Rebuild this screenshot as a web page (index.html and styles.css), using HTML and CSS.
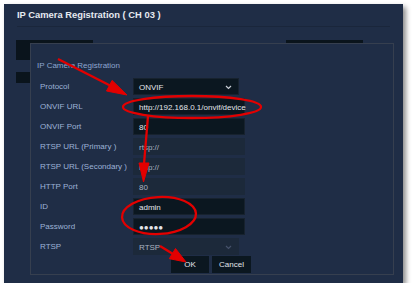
FILE: index.html
```html
<!DOCTYPE html>
<html lang="en">
<head>
    <meta charset="UTF-8">
    <meta name="viewport" content="width=device-width, initial-scale=1.0">
    <title>IP Camera Registration</title>
    <link rel="stylesheet" href="styles.css">
</head>
<body>
    <div class="panel">
        <div class="panel-header">IP Camera Registration ( CH 03 )</div>
        <div class="panel-body">
            <div class="bg-row">
                <div class="bg-block"></div>
                <div class="bg-block"></div>
            </div>
            <div class="bg-row short">
                <div class="bg-block"></div>
            </div>
        </div>

        <div class="dialog">
            <div class="dialog-title">IP Camera Registration</div>
            <form class="dialog-form">
                <div class="row">
                    <label>Protocol</label>
                    <div class="field select">ONVIF
                        <svg class="chev" width="7" height="5" viewBox="0 0 7 5"><path d="M1 1 L3.5 3.5 L6 1" fill="none" stroke="#c9ced6" stroke-width="1.2"/></svg>
                    </div>
                </div>
                <div class="row">
                    <label>ONVIF URL</label>
                    <div class="field">http://192.168.0.1/onvif/device</div>
                </div>
                <div class="row">
                    <label>ONVIF Port</label>
                    <div class="field">80</div>
                </div>
                <div class="row">
                    <label>RTSP URL (Primary )</label>
                    <div class="field disabled">rtsp://</div>
                </div>
                <div class="row">
                    <label>RTSP URL (Secondary )</label>
                    <div class="field disabled">rtsp://</div>
                </div>
                <div class="row">
                    <label>HTTP Port</label>
                    <div class="field disabled">80</div>
                </div>
                <div class="row">
                    <label>ID</label>
                    <div class="field">admin</div>
                </div>
                <div class="row">
                    <label>Password</label>
                    <div class="field">&#9679;&#9679;&#9679;&#9679;&#9679;</div>
                </div>
                <div class="row">
                    <label>RTSP</label>
                    <div class="field select disabled">RTSP
                        <svg class="chev" width="7" height="5" viewBox="0 0 7 5"><path d="M1 1 L3.5 3.5 L6 1" fill="none" stroke="#45516a" stroke-width="1.2"/></svg>
                    </div>
                </div>
                <div class="buttons">
                    <button type="button" class="btn ok">OK</button>
                    <button type="button" class="btn">Cancel</button>
                </div>
            </form>
        </div>
    </div>

    <!-- red markup drawn over the screenshot -->
    <svg class="marks" width="415" height="295" viewBox="0 0 415 295">
        <g fill="#e30000" stroke="#e30000">
            <line x1="58" y1="59" x2="111" y2="86" stroke-width="2.3"/>
            <polygon points="127,95 106.5,91 112.1,80.4" stroke-width="1"/>
            <line x1="148" y1="116" x2="144" y2="164" stroke-width="2.3"/>
            <polygon points="143.5,182 139,163 149,163" stroke-width="1"/>
            <line x1="160" y1="246" x2="173" y2="254" stroke-width="2.3"/>
            <polygon points="186,262 169.3,258.7 175.5,248.5" stroke-width="1"/>
        </g>
        <g fill="none" stroke="#e30000" stroke-width="2.3">
            <ellipse cx="192" cy="107" rx="69" ry="11"/>
            <ellipse cx="159" cy="215.5" rx="37" ry="18.5" transform="rotate(-3 159 215.5)"/>
        </g>
    </svg>
</body>
</html>
```

FILE: styles.css
```css
body {
    margin: 0;
    background: #ffffff;
    font-family: "Liberation Sans", Arial, sans-serif;
}
.panel {
    position: relative;
    margin: 4px 0 0 4px;
    width: 399px;
    height: 279px;
    background: #1f2d46;
    box-shadow: 3px 3px 5px rgba(0, 0, 0, 0.45);
}
.panel-header {
    margin: 0 13px;
    height: 22px;
    line-height: 22px;
    font-size: 9.4px;
    font-weight: bold;
    color: #e6eaf0;
    border-bottom: 1px solid #1a263b;
}
.panel-body {
    padding: 13px 40px 0 12px;
}
.bg-row {
    display: flex;
    justify-content: space-between;
    height: 20px;
}
.bg-row.short {
    margin-top: 12px;
    height: 11px;
}
.bg-block {
    width: 77px;
    background: #0a141c;
}
.dialog {
    position: absolute;
    left: 26px;
    top: 39px;
    width: 364px;
    height: 232px;
    box-sizing: border-box;
    border: 1px solid #363f4f;
    background: #1f2d46;
    padding: 16px 9px 0 9px;
}
.dialog-title {
    margin-left: -3px;
    height: 12px;
    line-height: 12px;
    font-size: 8px;
    color: #8ea6cf;
    margin-bottom: 6px;
}
.dialog-form {
    display: flex;
    flex-direction: column;
    gap: 3px;
}
.row {
    display: flex;
    height: 17px;
}
.row label {
    width: 93px;
    line-height: 17px;
    font-size: 8px;
    color: #9db2d6;
}
.field {
    position: relative;
    width: 112px;
    height: 17px;
    box-sizing: border-box;
    padding-left: 5px;
    line-height: 17px;
    font-size: 8px;
    color: #e2e5ea;
    background: #0b1720;
    border: 1px solid #17222e;
}
.field.disabled {
    background: #1c293a;
    border-color: #1c293a;
    color: #aab3c0;
}
.field.select {
    width: 106px;
}
.chev {
    position: absolute;
    right: 6px;
    top: 6px;
}
.buttons {
    display: flex;
    gap: 3px;
    margin: -2px 0 0 131px;
}
.btn {
    width: 38px;
    height: 17px;
    padding: 0;
    border: none;
    background: #0b1720;
    color: #e2e5ea;
    font-family: "Liberation Sans", Arial, sans-serif;
    font-size: 8px;
}
.btn + .btn {
    width: 39px;
}
.marks {
    position: absolute;
    left: 0;
    top: 0;
    pointer-events: none;
}
```
